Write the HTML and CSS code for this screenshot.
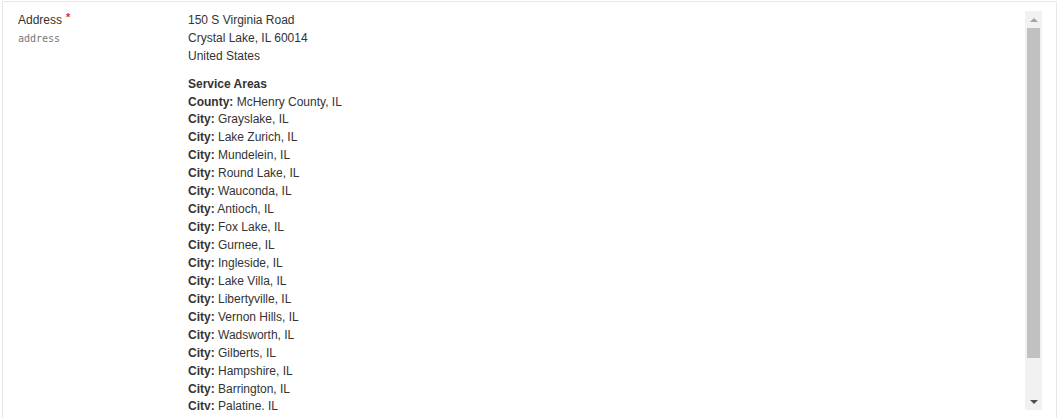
FILE: index.html
```html
<!DOCTYPE html>
<html>
<head>
<meta charset="utf-8">
<link rel="stylesheet" href="styles.css">
</head>
<body>
<div class="panel">
  <div class="frame">
    <div class="scroll">
      <div class="field">
        <div class="label">
          <div class="label-name">Address<span class="req">*</span></div>
          <div class="label-key">address</div>
        </div>
        <div class="value">
          <div class="addr">
            <div>150 S Virginia Road</div>
            <div>Crystal Lake, IL 60014</div>
            <div>United States</div>
          </div>
          <div class="areas">
            <div class="areas-title">Service Areas</div>
            <div><b>County:</b> McHenry County, IL</div>
            <div><b>City:</b> Grayslake, IL</div>
            <div><b>City:</b> Lake Zurich, IL</div>
            <div><b>City:</b> Mundelein, IL</div>
            <div><b>City:</b> Round Lake, IL</div>
            <div><b>City:</b> Wauconda, IL</div>
            <div><b>City:</b> Antioch, IL</div>
            <div><b>City:</b> Fox Lake, IL</div>
            <div><b>City:</b> Gurnee, IL</div>
            <div><b>City:</b> Ingleside, IL</div>
            <div><b>City:</b> Lake Villa, IL</div>
            <div><b>City:</b> Libertyville, IL</div>
            <div><b>City:</b> Vernon Hills, IL</div>
            <div><b>City:</b> Wadsworth, IL</div>
            <div><b>City:</b> Gilberts, IL</div>
            <div><b>City:</b> Hampshire, IL</div>
            <div><b>City:</b> Barrington, IL</div>
            <div><b>City:</b> Palatine, IL</div>
          </div>
        </div>
      </div>
    </div>
    <div class="scrollbar">
      <div class="sb-btn"><span class="tri-up"></span></div>
      <div class="sb-track"><div class="sb-thumb"></div></div>
      <div class="sb-btn"><span class="tri-down"></span></div>
    </div>
  </div>
</div>
</body>
</html>
```
FILE: styles.css
```css
html, body {
  margin: 0;
  padding: 0;
  background: #fff;
  overflow: hidden;
}
body {
  font-family: "Liberation Sans", Arial, sans-serif;
  font-size: 12px;
  line-height: 18px;
  color: #333;
}
.panel {
  margin: 1px 0 0 2px;
  width: 1053px;
  height: 440px;
  border: 1px solid #e8e8e8;
  box-sizing: content-box;
}
.frame {
  display: flex;
  padding: 9px 14px 0 15px;
}
.scroll {
  flex: 1;
  height: 399px;
  overflow: hidden;
}
.field {
  display: grid;
  grid-template-columns: 170px 1fr;
}
.label-name {
  line-height: 18px;
}
.req {
  color: #d7263d;
  font-weight: bold;
  font-size: 11px;
  vertical-align: top;
  margin-left: 4px;
  line-height: 12px;
}
.label-key {
  font-family: "DejaVu Sans Mono", "Liberation Mono", monospace;
  font-size: 10px;
  color: #777;
  line-height: 18px;
  margin-top: 1px;
}
.areas {
  margin-top: 10.6px;
  line-height: 17.94px;
}
.areas-title {
  font-weight: bold;
}
b {
  font-weight: bold;
}
.scrollbar {
  width: 17px;
  height: 399px;
  background: #f1f1f1;
  display: flex;
  flex-direction: column;
}
.sb-btn {
  height: 17px;
  display: flex;
  align-items: center;
  justify-content: center;
}
.tri-up {
  width: 0;
  height: 0;
  border-left: 4px solid transparent;
  border-right: 4px solid transparent;
  border-bottom: 4px solid #a3a3a3;
}
.tri-down {
  width: 0;
  height: 0;
  border-left: 4px solid transparent;
  border-right: 4px solid transparent;
  border-top: 4px solid #505050;
}
.sb-track {
  flex: 1;
  padding: 0 2px;
}
.sb-thumb {
  height: 330px;
  background: #c1c1c1;
}
```
